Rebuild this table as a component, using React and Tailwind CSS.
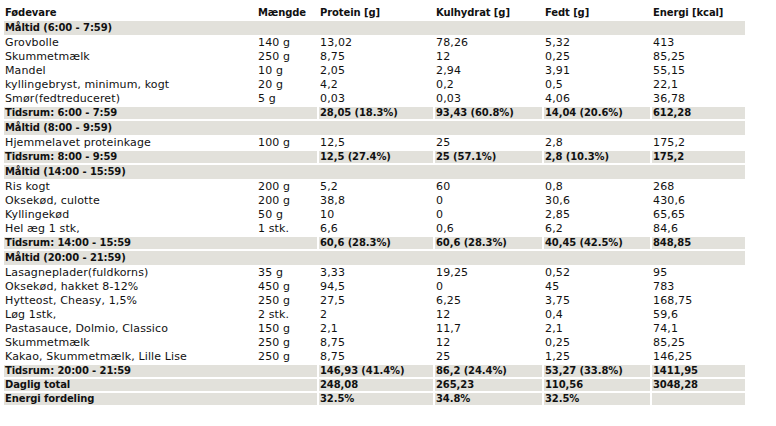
import React from 'react';

const meals = [
  {
    title: 'Måltid (6:00 - 7:59)',
    items: [
      ['Grovbolle', '140 g', '13,02', '78,26', '5,32', '413'],
      ['Skummetmælk', '250 g', '8,75', '12', '0,25', '85,25'],
      ['Mandel', '10 g', '2,05', '2,94', '3,91', '55,15'],
      ['kyllingebryst, minimum, kogt', '20 g', '4,2', '0,2', '0,5', '22,1'],
      ['Smør(fedtreduceret)', '5 g', '0,03', '0,03', '4,06', '36,78'],
    ],
    total: ['Tidsrum: 6:00 - 7:59', '28,05 (18.3%)', '93,43 (60.8%)', '14,04 (20.6%)', '612,28'],
  },
  {
    title: 'Måltid (8:00 - 9:59)',
    items: [['Hjemmelavet proteinkage', '100 g', '12,5', '25', '2,8', '175,2']],
    total: ['Tidsrum: 8:00 - 9:59', '12,5 (27.4%)', '25 (57.1%)', '2,8 (10.3%)', '175,2'],
  },
  {
    title: 'Måltid (14:00 - 15:59)',
    items: [
      ['Ris kogt', '200 g', '5,2', '60', '0,8', '268'],
      ['Oksekød, culotte', '200 g', '38,8', '0', '30,6', '430,6'],
      ['Kyllingekød', '50 g', '10', '0', '2,85', '65,65'],
      ['Hel æg 1 stk,', '1 stk.', '6,6', '0,6', '6,2', '84,6'],
    ],
    total: ['Tidsrum: 14:00 - 15:59', '60,6 (28.3%)', '60,6 (28.3%)', '40,45 (42.5%)', '848,85'],
  },
  {
    title: 'Måltid (20:00 - 21:59)',
    items: [
      ['Lasagneplader(fuldkorns)', '35 g', '3,33', '19,25', '0,52', '95'],
      ['Oksekød, hakket 8-12%', '450 g', '94,5', '0', '45', '783'],
      ['Hytteost, Cheasy, 1,5%', '250 g', '27,5', '6,25', '3,75', '168,75'],
      ['Løg 1stk,', '2 stk.', '2', '12', '0,4', '59,6'],
      ['Pastasauce, Dolmio, Classico', '150 g', '2,1', '11,7', '2,1', '74,1'],
      ['Skummetmælk', '250 g', '8,75', '12', '0,25', '85,25'],
      ['Kakao, Skummetmælk, Lille Lise', '250 g', '8,75', '25', '1,25', '146,25'],
    ],
    total: ['Tidsrum: 20:00 - 21:59', '146,93 (41.4%)', '86,2 (24.4%)', '53,27 (33.8%)', '1411,95'],
  },
];

const summary = [
  ['Daglig total', '248,08', '265,23', '110,56', '3048,28'],
  ['Energi fordeling', '32.5%', '34.8%', '32.5%', ''],
];

// regular cells are 11px, bold ones are 10px (like the original verdana table)
const cell = 'px-[1px] py-0 h-[12px] leading-[12px] whitespace-nowrap text-left align-middle';
const plain = `${cell} text-[11px] tracking-[0.13px] font-normal`;
const bold = `${cell} text-[10px] tracking-[-0.1px] font-bold`;

function TotalRow({ row }) {
  return (
    <tr>
      <td colSpan={2} className={`${bold} bg-[#e2e1db]`}>{row[0]}</td>
      {row.slice(1).map((v, i) => (
        <td key={i} className={`${bold} bg-[#e2e1db]`}>{v}</td>
      ))}
    </tr>
  );
}

export default function App() {
  return (
    <div className="w-[776px] h-[426px] bg-white text-[#111] pt-[5px] pl-[2px]" style={{ fontFamily: '"DejaVu Sans", Verdana, sans-serif' }}>
      <table className="table-fixed border-separate border-spacing-[2px] w-[745px]">
        <colgroup>
          <col className="w-[251px]" />
          <col className="w-[60px]" />
          <col className="w-[114px]" />
          <col className="w-[107px]" />
          <col className="w-[106px]" />
          <col className="w-[93px]" />
        </colgroup>
        <thead>
          <tr>
            {['Fødevare', 'Mængde', 'Protein [g]', 'Kulhydrat [g]', 'Fedt [g]', 'Energi [kcal]'].map((h) => (
              <th key={h} className={bold}>{h}</th>
            ))}
          </tr>
        </thead>
        <tbody>
          {meals.map((m) => (
            <React.Fragment key={m.title}>
              <tr>
                <td colSpan={6} className="px-[1px] py-0 h-[14px] leading-[14px] bg-[#e2e1db] text-[10px] tracking-[-0.1px] font-bold">{m.title}</td>
              </tr>
              {m.items.map((r, i) => (
                <tr key={i}>
                  {r.map((v, j) => (
                    <td key={j} className={plain}>{v}</td>
                  ))}
                </tr>
              ))}
              <TotalRow row={m.total} />
            </React.Fragment>
          ))}
          {summary.map((r) => (
            <TotalRow key={r[0]} row={r} />
          ))}
        </tbody>
      </table>
    </div>
  );
}
